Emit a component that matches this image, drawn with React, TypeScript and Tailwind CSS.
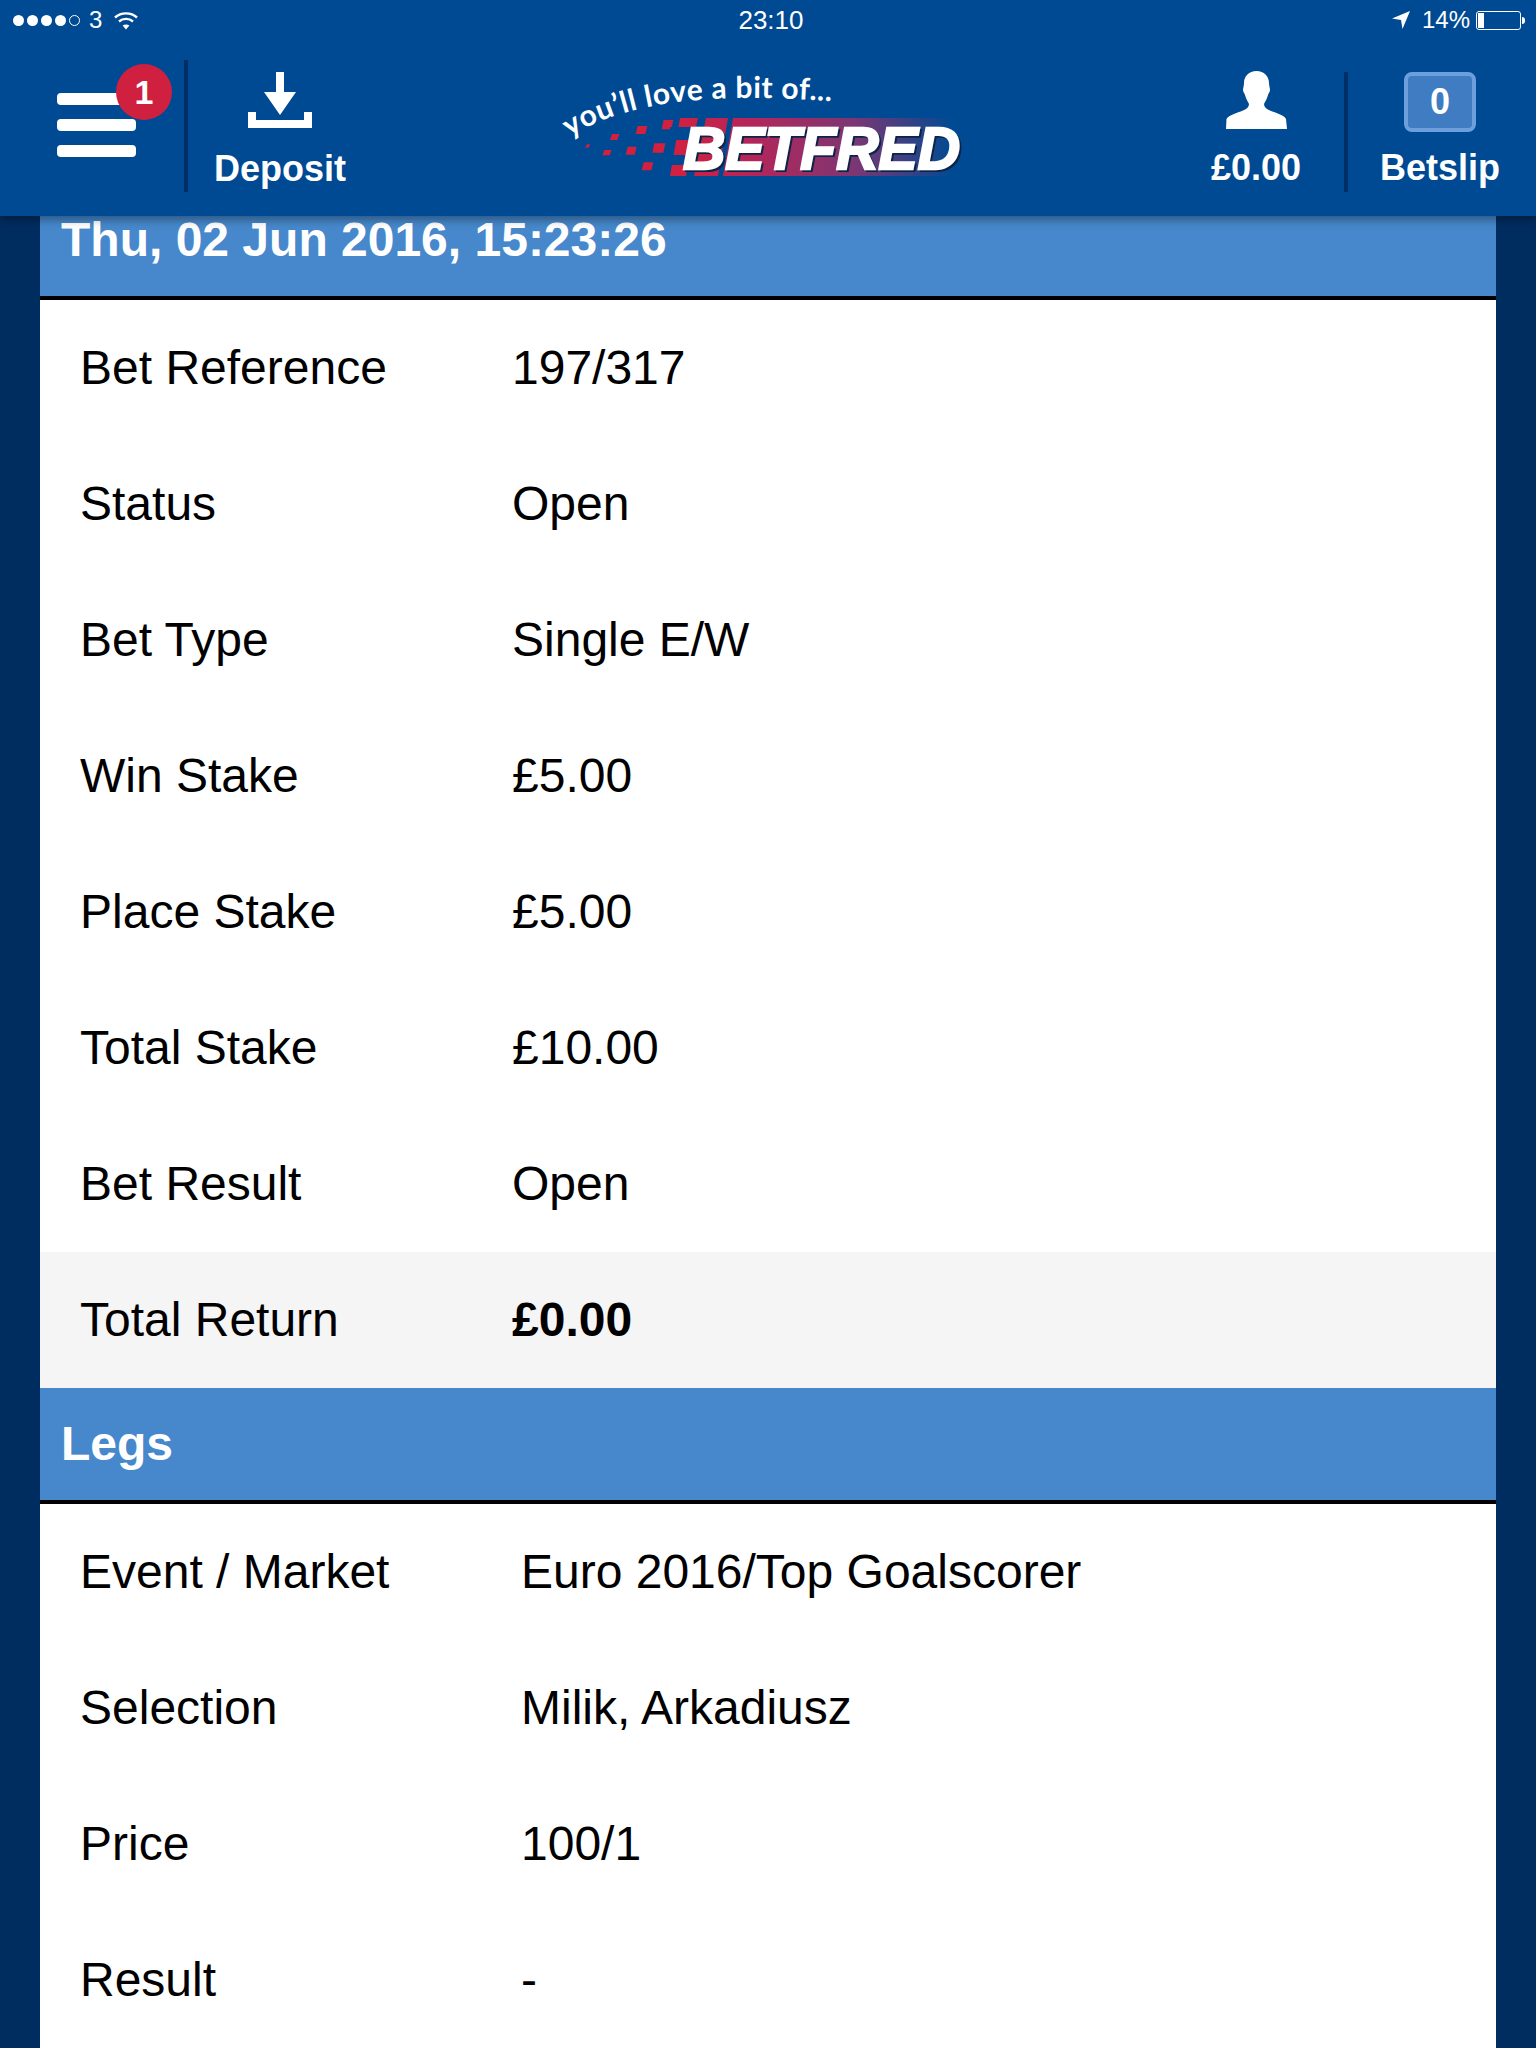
const betRows = [
  ['Bet Reference', '197/317'],
  ['Status', 'Open'],
  ['Bet Type', 'Single E/W'],
  ['Win Stake', '£5.00'],
  ['Place Stake', '£5.00'],
  ['Total Stake', '£10.00'],
  ['Bet Result', 'Open'],
];

const legRows = [
  ['Event / Market', 'Euro 2016/Top Goalscorer'],
  ['Selection', 'Milik, Arkadiusz'],
  ['Price', '100/1'],
  ['Result', '-'],
];

function StatusBar() {
  return (
    <div className="flex h-[40px] items-center text-[24px] font-light text-white">
      <div className="flex w-[306px] items-center pl-[13px]">
        <div className="flex items-center gap-[3px]">
          <span className="h-[11px] w-[11px] rounded-full bg-white" />
          <span className="h-[11px] w-[11px] rounded-full bg-white" />
          <span className="h-[11px] w-[11px] rounded-full bg-white" />
          <span className="h-[11px] w-[11px] rounded-full bg-white" />
          <span className="h-[11px] w-[11px] rounded-full border border-white" />
        </div>
        <span className="ml-[9px]">3</span>
        <svg className="ml-[12px]" width="24" height="19" viewBox="0 0 24 19" fill="none" stroke="white" strokeWidth="2.4">
          <path d="M1 6.5C7 1 17 1 23 6.5" />
          <path d="M5 10.5C9 7 15 7 19 10.5" />
          <path d="M12 18.5L8.6 14.6C10.6 13 13.4 13 15.4 14.6Z" fill="white" stroke="none" />
        </svg>
      </div>
      <div className="flex-1 text-center text-[26px]">23:10</div>
      <div className="flex w-[300px] items-center justify-end pr-[11px]">
        <svg width="18" height="18" viewBox="0 0 18 18" fill="white">
          <path d="M18 0L10.5 18L9 9L0 7.5Z" />
        </svg>
        <span className="ml-[12px]">14%</span>
        <div className="ml-[6px] flex h-[19px] w-[45px] items-center rounded-[3px] border border-white p-[1px]">
          <div className="h-full w-[6px] bg-white" />
        </div>
        <div className="ml-[1px] h-[7px] w-[3px] rounded-r-full bg-white" />
      </div>
    </div>
  );
}

function Logo() {
  const squares = [
    [425, 210, 32, 28],
    [347, 228, 32, 24],
    [270, 252, 25, 18],
    [195, 283, 13, 10],
    [247, 300, 25, 16],
    [317, 290, 30, 24],
    [397, 280, 36, 28],
    [365, 337, 32, 24],
  ];
  return (
    <svg className="mt-[10px] shrink-0" width="460" height="150" viewBox="0 0 460 150">
      <defs>
        <linearGradient id="bar" x1="0" x2="1" y1="0" y2="0">
          <stop offset="0" stopColor="#d3203f" />
          <stop offset="0.3" stopColor="#b3265a" />
          <stop offset="0.65" stopColor="#7d3673" />
          <stop offset="1" stopColor="#004a93" />
        </linearGradient>
        <path id="curve" d="M50 87C104 53 184 39 344 54" />
      </defs>
      {squares.map(([x, y, w, h]) => (
        <path key={x} d={`M${x / 3 + 2} ${y / 3}h${w / 3 - 1}l-2 ${h / 3}h${1 - w / 3}Z`} fill="#d3203f" />
      ))}
      <path d="M160 68H432L430 126H150Z" fill="url(#bar)" />
      <path d="M178 68H186L174 126H166ZM208 68H213L203 126H198Z" fill="#004a93" />
      <path d="M150 77H176L174 90H150ZM150 105H168L166 115H150Z" fill="#004a93" />
      <text fontFamily="Lato, sans-serif" fontWeight="700" fontSize="30" letterSpacing="0.6" fill="white">
        <textPath href="#curve">you’ll love a bit of...</textPath>
      </text>
      <text x="165" y="121" fontFamily="'Liberation Sans', sans-serif" fontStyle="italic" fontWeight="700" fontSize="60" textLength="277" lengthAdjust="spacingAndGlyphs" fill="#0b2447" stroke="#0b2447" strokeWidth="2">BETFRED</text>
      <text x="163" y="119" fontFamily="'Liberation Sans', sans-serif" fontStyle="italic" fontWeight="700" fontSize="60" textLength="277" lengthAdjust="spacingAndGlyphs" fill="white" stroke="white" strokeWidth="2.5">BETFRED</text>
    </svg>
  );
}

function NavBar() {
  return (
    <div className="flex h-[176px] items-start text-[36px] leading-[44px] font-bold text-white">
      <div className="relative flex h-full w-[184px] flex-col gap-[14px] pt-[53px] pl-[57px]">
        <div className="h-3 w-[79px] rounded-[4px] bg-white" />
        <div className="h-3 w-[79px] rounded-[4px] bg-white" />
        <div className="h-3 w-[79px] rounded-[4px] bg-white" />
        <div className="absolute top-[24px] left-[116px] flex h-[56px] w-[56px] items-center justify-center rounded-full bg-[#cf2040] text-[34px]">1</div>
      </div>
      <div className="mt-[20px] h-[132px] w-1 bg-[#002f66]" />
      <div className="flex w-[184px] flex-col items-center pt-[32px]">
        <svg width="64" height="56" viewBox="0 0 64 56" fill="white">
          <path d="M28 0H36V20H48L32 43L16 20H28Z" />
          <path d="M0 40H8V48H56V40H64V56H0Z" />
        </svg>
        <span className="mt-[19px]">Deposit</span>
      </div>
      <div className="w-[148px]" />
      <Logo />
      <div className="w-[188px]" />
      <div className="flex w-[176px] flex-col items-center pt-[31px]">
        <svg width="61" height="58" viewBox="0 0 61 58" fill="white">
          <path d="M30.5 0C38 0 43 5 43 12C43 15 44 17 44 19C44 21 42.5 22 42 24C41 28 39 31 38 33C38 36 40 38 44 39.5C50 42 58 44 60 48L61 58L0 58L0.5 48C3 44 11 42 17 39.5C21 38 23 36 23 33C22 31 20 28 19 24C18.5 22 17 21 17 19C17 17 18 15 18 12C18 5 23 0 30.5 0Z" />
        </svg>
        <span className="mt-[17px]">£0.00</span>
      </div>
      <div className="mt-[32px] h-[120px] w-1 bg-[#002f66]" />
      <div className="flex w-[184px] flex-col items-center pt-[32px]">
        <div className="flex h-[60px] w-[72px] items-center justify-center rounded-[8px] border-4 border-[#6c9fdc] bg-[#3f7cc1]">0</div>
        <span className="mt-[14px]">Betslip</span>
      </div>
    </div>
  );
}

function Row({ label, value, valueLeft }: { label: string; value: string; valueLeft: string }) {
  return (
    <div className="flex h-[136px] items-center pl-[40px]">
      <div className={valueLeft}>{label}</div>
      <div>{value}</div>
    </div>
  );
}

export default function App() {
  return (
    <div className="h-[2048px] overflow-hidden bg-[#002d60] font-['Liberation_Sans',Arial,sans-serif] text-black">
      <header className="relative z-10 h-[216px] bg-[#004a93] shadow-[0_4px_8px_rgba(0,0,0,0.35)]">
        <StatusBar />
        <NavBar />
      </header>
      <main className="mx-[40px] bg-white text-[48px]">
        <div className="h-[84px] border-b-4 border-black bg-[#4688cb] pt-[2px] pl-[21px] leading-[44px] font-bold text-white">
          Thu, 02 Jun 2016, 15:23:26
        </div>
        {betRows.map(([label, value]) => (
          <Row key={label} label={label} value={value} valueLeft="w-[432px]" />
        ))}
        <div className="flex h-[136px] items-center bg-[#f5f5f5] pl-[40px]">
          <div className="w-[432px]">Total Return</div>
          <div className="font-bold">£0.00</div>
        </div>
        <div className="flex h-[116px] items-center border-b-4 border-black bg-[#4688cb] pl-[21px] font-bold text-white">Legs</div>
        {legRows.map(([label, value]) => (
          <Row key={label} label={label} value={value} valueLeft="w-[441px]" />
        ))}
      </main>
    </div>
  );
}
